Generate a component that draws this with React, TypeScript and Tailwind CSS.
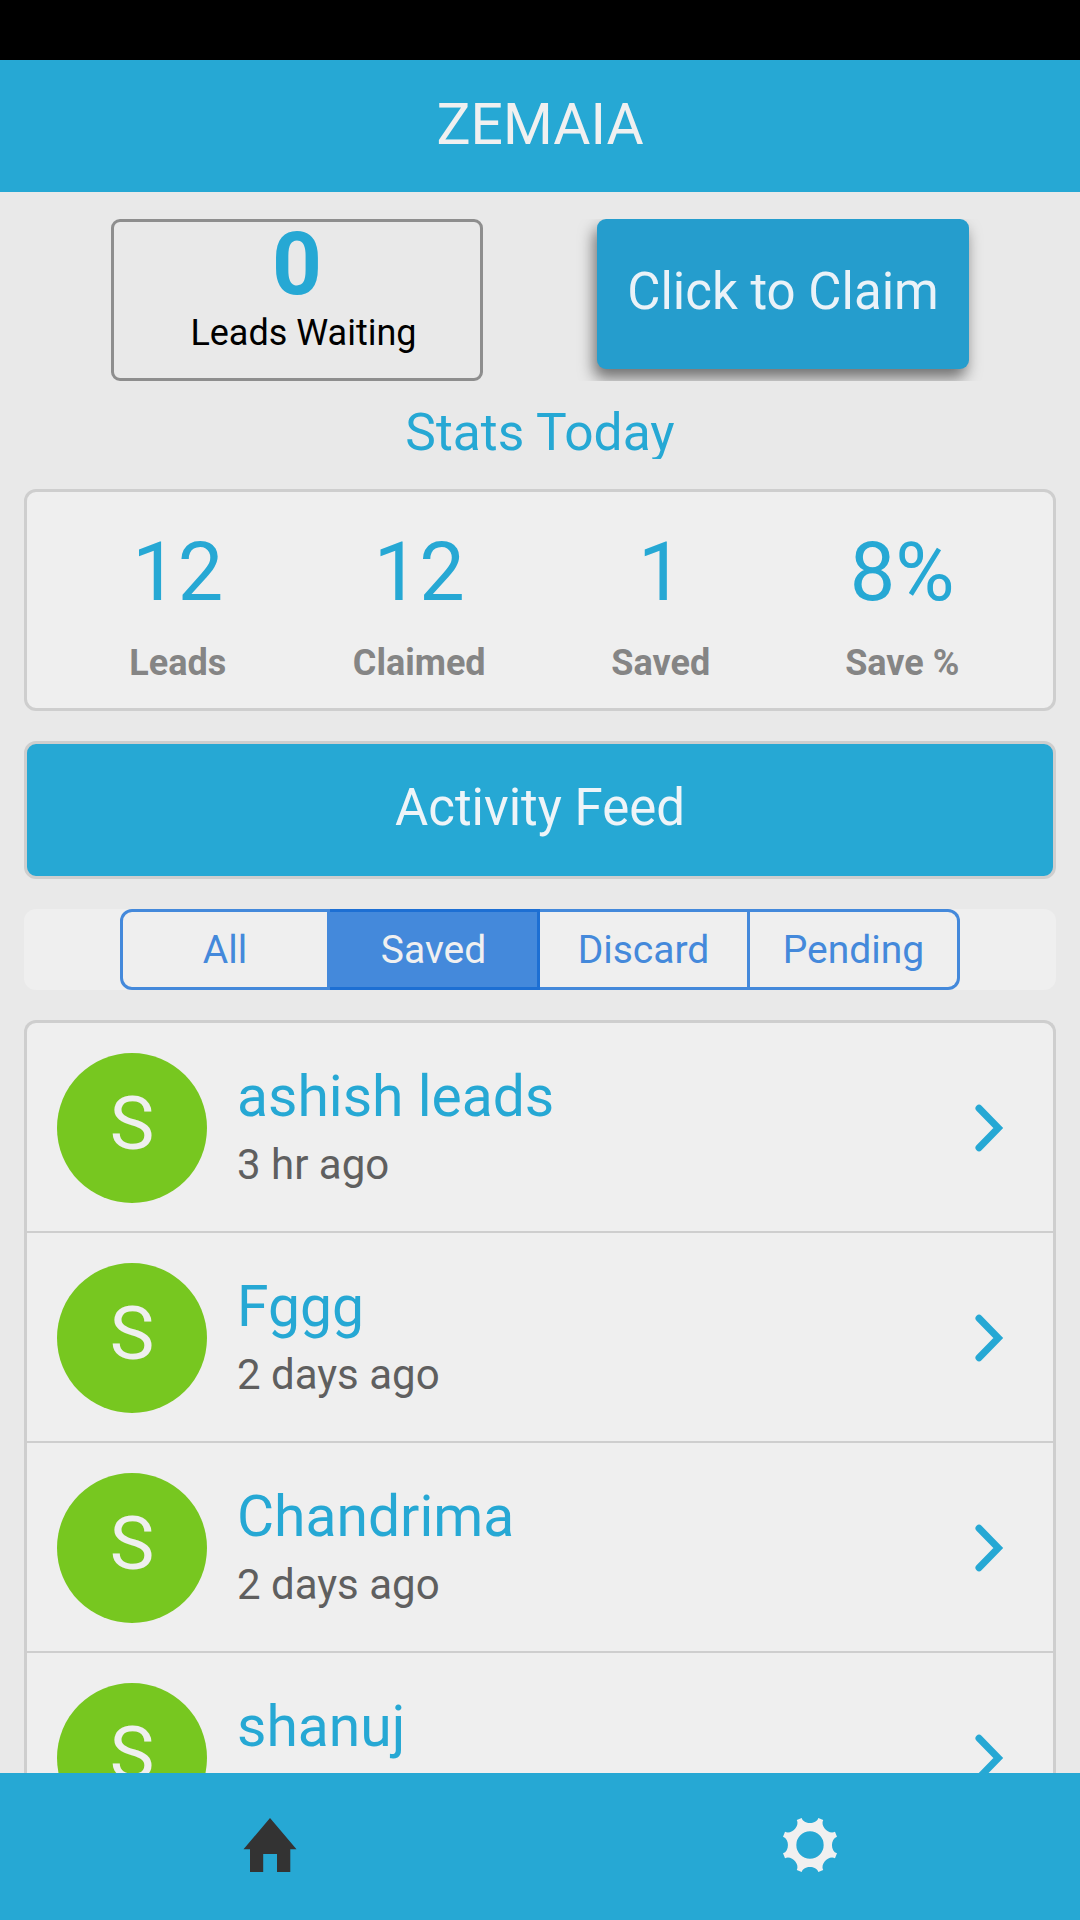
import clsx from 'clsx';

const STATS = [
  { label: 'Leads', value: '12' },
  { label: 'Claimed', value: '12' },
  { label: 'Saved', value: '1' },
  { label: 'Save %', value: '8%' },
];

const FILTERS = ['All', 'Saved', 'Discard', 'Pending'];

const LEADS = [
  { id: 1, name: 'ashish leads', time: '3 hr ago' },
  { id: 2, name: 'Fggg', time: '2 days ago' },
  { id: 3, name: 'Chandrima', time: '2 days ago' },
  { id: 4, name: 'shanuj' },
];

const HomeIcon = () => (
  <svg width="54" height="54" viewBox="0 0 54 54" fill="#333333">
    <path d="M27 0 53.5 31.3H47.3V54H34V36H20.2V54H7V31.3H.5Z" />
  </svg>
);

// one notch + tooth edge, repeated every 45deg
const gearPath = () => {
  const points = [[-25, -81], [-19, -61], [19, -61], [25, -81]];
  let d = '';
  for (let i = 0; i < 8; i++) {
    const a = (i * Math.PI) / 4;
    const [p0, p1, p2, p3] = points.map(([x, y]) =>
      [x * Math.cos(a) - y * Math.sin(a), x * Math.sin(a) + y * Math.cos(a)]
        .map((n) => n.toFixed(2))
        .join(' '),
    );
    d += `${i === 0 ? 'M' : 'L'}${p0}C${p1} ${p2} ${p3}`;
  }
  return `${d}ZM41 0A41 41 0 1 0 -41 0A41 41 0 1 0 41 0Z`;
};

const GearIcon = () => (
  <svg width="56" height="56" viewBox="-84 -84 168 168" fill="#f0f0f0" fillRule="evenodd">
    <path d={gearPath()} />
  </svg>
);

const Chevron = () => (
  <svg width="30" height="48" viewBox="0 0 30 48" fill="none">
    <path d="M4 4.2 23.3 24 4 43.8" stroke="#26a8d4" strokeWidth="7" strokeLinecap="round" />
  </svg>
);

const LeadRow = ({ name, time }: { name: string; time?: string }) => (
  <li className="flex h-[210px] shrink-0 items-start border-b-2 border-[#cecece] pt-[30px] pr-[48px] pl-[30px]">
    <div className="h-[150px] w-[150px] rounded-full bg-[#77c720] text-center text-[75px] leading-[140px] text-[#efefef]">
      S
    </div>
    <div className="ml-[30px] flex-1">
      <p className="text-[57px] leading-[88px] text-[#26a8d4]">{name}</p>
      {time && <p className="text-[42px] leading-[47px] text-[#5f5f5f]">{time}</p>}
    </div>
    <div className="flex h-[150px] items-center">
      <Chevron />
    </div>
  </li>
);

const App = () => {
  return (
    <div className="flex h-[1920px] w-[1080px] flex-col overflow-hidden bg-[#e9e9e9] font-[Roboto,sans-serif]">
      <div className="h-[60px] shrink-0 bg-black" />
      <header className="flex h-[132px] shrink-0 items-center justify-center bg-[#26a8d4] pb-[3px]">
        <h1 className="text-[57px] leading-none text-[#f0f0f0]">ZEMAIA</h1>
      </header>

      <main className="flex min-h-0 flex-1 flex-col overflow-hidden px-6 pt-[27px]">
        <div className="flex h-[162px] shrink-0">
          <div className="ml-[87px] w-[372px] rounded-[9px] border-[3px] border-[#8e8e8e] text-center">
            <p className="text-[87px] leading-[84px] font-bold text-[#26a8d4]">0</p>
            <p className="pl-[13px] text-[36px] leading-[55px] text-black">Leads Waiting</p>
          </div>
          {/* overflow cuts the button shadow at the row's edge */}
          <div className="ml-[84px] overflow-hidden px-[30px]">
            <button
              type="button"
              className="h-[150px] w-[372px] rounded-[9px] bg-[#259dcd] pb-[5px] text-[51px] leading-none text-[#eaf2f8] shadow-[-3px_9px_15px_0px_rgba(0,0,0,0.52)]"
            >
              Click to Claim
            </button>
          </div>
        </div>

        <h2 className="mt-6 h-[54px] shrink-0 overflow-hidden text-center text-[51.5px] leading-[56px] text-[#26a8d4]">
          Stats Today
        </h2>

        <section className="mt-[30px] grid h-[222px] shrink-0 grid-cols-4 rounded-xl border-[3px] border-[#cecece] bg-[#efefef] px-[30px] pt-[30px] text-center">
          {STATS.map((stat) => (
            <div key={stat.label}>
              <p className="text-[81px] leading-[102px] text-[#26a8d4]">{stat.value}</p>
              <p className="text-[36px] leading-[78px] font-bold text-[#858585]">{stat.label}</p>
            </div>
          ))}
        </section>

        <section className="mt-[30px] flex h-[138px] shrink-0 items-center justify-center rounded-xl border-[3px] border-[#cecece] bg-[#26a8d4] pb-[5px]">
          <h2 className="text-[51px] leading-none text-[#eef4f8]">Activity Feed</h2>
        </section>

        <div className="mt-[30px] flex h-[81px] shrink-0 justify-center rounded-xl bg-[#efefef]">
          {FILTERS.map((filter) => (
            <button
              key={filter}
              type="button"
              className={clsx(
                'w-[210px] border-y-[3px] border-r-[3px] pt-[1px] text-[39px] leading-none first:rounded-l-xl first:border-l-[3px] last:rounded-r-xl',
                filter === 'Saved'
                  ? 'border-[#1d6fd3] bg-[#4489db] text-[#f0f0f0]'
                  : 'border-[#4489db] text-[#4489db]',
              )}
            >
              {filter}
            </button>
          ))}
        </div>

        <ul className="mt-[30px] flex min-h-0 flex-1 flex-col overflow-hidden rounded-t-xl border-[3px] border-b-0 border-[#cecece] bg-[#efefef]">
          {LEADS.map((lead) => (
            <LeadRow key={lead.id} name={lead.name} time={lead.time} />
          ))}
        </ul>
      </main>

      <nav className="grid h-[147px] shrink-0 grid-cols-2 bg-[#26a8d4]">
        <button type="button" aria-label="Home" className="flex items-center justify-center pb-[3px]">
          <HomeIcon />
        </button>
        <button type="button" aria-label="Settings" className="flex items-center justify-center pb-[3px]">
          <GearIcon />
        </button>
      </nav>
    </div>
  );
};

export default App;
